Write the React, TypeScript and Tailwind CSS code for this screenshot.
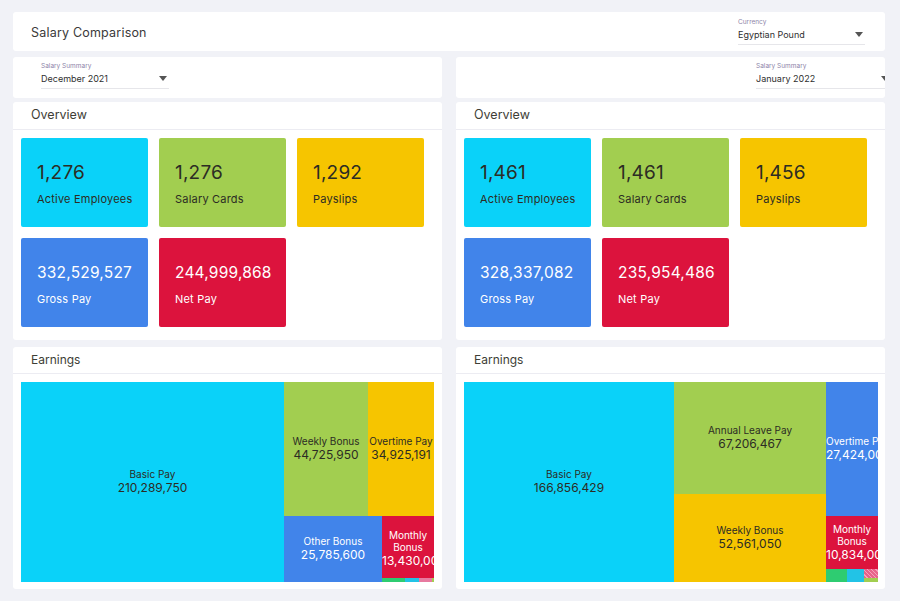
import React from 'react';

const font = { fontFamily: 'Inter, "Noto Sans", sans-serif' };

type Tile = { value: string; label: string; bg: string; dark: boolean };

const leftTiles: Tile[] = [
  { value: '1,276', label: 'Active Employees', bg: 'bg-[#0ad2f9]', dark: true },
  { value: '1,276', label: 'Salary Cards', bg: 'bg-[#a2ce50]', dark: true },
  { value: '1,292', label: 'Payslips', bg: 'bg-[#f6c500]', dark: true },
  { value: '332,529,527', label: 'Gross Pay', bg: 'bg-[#4184ea]', dark: false },
  { value: '244,999,868', label: 'Net Pay', bg: 'bg-[#dc133d]', dark: false },
];

const rightTiles: Tile[] = [
  { value: '1,461', label: 'Active Employees', bg: 'bg-[#0ad2f9]', dark: true },
  { value: '1,461', label: 'Salary Cards', bg: 'bg-[#a2ce50]', dark: true },
  { value: '1,456', label: 'Payslips', bg: 'bg-[#f6c500]', dark: true },
  { value: '328,337,082', label: 'Gross Pay', bg: 'bg-[#4184ea]', dark: false },
  { value: '235,954,486', label: 'Net Pay', bg: 'bg-[#dc133d]', dark: false },
];

function Caret() {
  return (
    <svg width="8" height="5" viewBox="0 0 8 5" className="shrink-0">
      <path d="M0 0 L8 0 L4 5 Z" fill="#555" />
    </svg>
  );
}

function Select({ label, value, width }: { label: string; value: string; width: string }) {
  return (
    <div className={`${width} flex flex-col`}>
      <span className="text-[6.5px] leading-[8px] text-[#8d84a8]">{label}</span>
      <div className="flex items-center justify-between border-b border-[#e6e6ea] pb-[4px] pt-[3px] pr-[2px]">
        <span className="text-[9px] leading-[11px] text-[#2f2f2f]">{value}</span>
        <Caret />
      </div>
    </div>
  );
}

function StatTile({ t }: { t: Tile }) {
  const txt = t.dark ? 'text-[#2c2c24]' : 'text-white';
  // long amounts are set a bit smaller, as in the source
  const big = t.value.length > 6 ? 'text-[15.5px]' : 'text-[19px]';
  return (
    <div className={`${t.bg} ${txt} h-[89px] rounded-[2px] flex flex-col justify-center pl-[16px] pt-[3px]`}>
      <div className={`${big} leading-[22px] tracking-[0.2px]`}>{t.value}</div>
      <div className="text-[11px] leading-[13px] mt-[9px] tracking-[0.2px]">{t.label}</div>
    </div>
  );
}

function Overview({ tiles }: { tiles: Tile[] }) {
  return (
    <div className="bg-white rounded-[3px] h-[238px] flex flex-col">
      <div className="h-[28px] flex items-center pl-[18px] border-b border-[#ececf2] text-[12.5px] text-[#3e3e36]">
        Overview
      </div>
      <div className="grid grid-cols-[127px_127px_127px] gap-x-[11px] gap-y-[11px] pl-[8px] pt-[8px]">
        {tiles.map((t, i) => (
          <StatTile key={i} t={t} />
        ))}
      </div>
    </div>
  );
}

function Cell({
  label,
  value,
  bg,
  dark,
  className = '',
}: {
  label: React.ReactNode;
  value?: string;
  bg: string;
  dark: boolean;
  className?: string;
}) {
  const txt = dark ? 'text-[#2c2c24]' : 'text-white';
  return (
    <div className={`${bg} ${txt} ${className} overflow-hidden flex flex-col justify-center text-center`}>
      <div className="text-[10px] leading-[12px]">{label}</div>
      {value && <div className="text-[12px] leading-[16px] whitespace-nowrap">{value}</div>}
    </div>
  );
}

function LeftTreemap() {
  return (
    <div className="flex h-[200px] w-[413px]">
      <Cell label="Basic Pay" value="210,289,750" bg="bg-[#0ad2f9]" dark className="w-[263px] h-full" />
      <div className="flex flex-col w-[150px]">
        <div className="flex h-[134px]">
          <Cell label="Weekly Bonus" value="44,725,950" bg="bg-[#a2ce50]" dark className="w-[84px] h-full" />
          <Cell label="Overtime Pay" value="34,925,191" bg="bg-[#f6c500]" dark className="w-[66px] h-full whitespace-nowrap" />
        </div>
        <div className="flex h-[66px]">
          <Cell label="Other Bonus" value="25,785,600" bg="bg-[#4184ea]" dark={false} className="w-[98px] h-full" />
          <div className="flex flex-col w-[52px]">
            <Cell
              label={<>Monthly<br />Bonus</>}
              value="13,430,000"
              bg="bg-[#dc133d]"
              dark={false}
              className="h-[62px] pt-[4px]"
            />
            <div className="flex h-[4px]">
              <div className="w-[23px] bg-[#2ecc71]" />
              <div className="w-[14px] bg-[#22c3e6]" />
              <div className="w-[13px] bg-[#e77aa0]" />
              <div className="w-[2px] bg-[#a2ce50]" />
            </div>
          </div>
        </div>
      </div>
    </div>
  );
}

function RightTreemap() {
  return (
    <div className="flex h-[200px] w-[414px]">
      <Cell label="Basic Pay" value="166,856,429" bg="bg-[#0ad2f9]" dark className="w-[210px] h-full" />
      <div className="flex flex-col w-[152px]">
        <Cell label="Annual Leave Pay" value="67,206,467" bg="bg-[#a2ce50]" dark className="h-[112px]" />
        <Cell label="Weekly Bonus" value="52,561,050" bg="bg-[#f6c500]" dark className="h-[88px]" />
      </div>
      <div className="flex flex-col w-[52px]">
        <Cell label="Overtime Pay" value="27,424,000" bg="bg-[#4184ea]" dark={false} className="h-[134px] whitespace-nowrap" />
        <Cell
          label={<>Monthly<br />Bonus</>}
          value="10,834,000"
          bg="bg-[#dc133d]"
          dark={false}
          className="h-[53px]"
        />
        <div className="flex h-[13px]">
          <div className="w-[21px] bg-[#2ecc71]" />
          <div className="w-[17px] bg-[#22c3e6]" />
          <div className="w-[14px] flex flex-col">
            <div className="h-[9px] bg-[repeating-linear-gradient(45deg,#e8638a_0px,#e8638a_2px,#f3a3bb_2px,#f3a3bb_3px)]" />
            <div className="h-[4px] bg-[#a2ce50]" />
          </div>
        </div>
      </div>
    </div>
  );
}

function Earnings({ children }: { children: React.ReactNode }) {
  return (
    <div className="bg-white rounded-[3px] h-[242px] flex flex-col">
      <div className="h-[27px] flex items-center pl-[18px] border-b border-[#ececf2] text-[12px] text-[#3e3e36]">
        Earnings
      </div>
      <div className="pl-[8px] pt-[8px]">{children}</div>
    </div>
  );
}

export default function App() {
  return (
    <div style={font} className="w-[900px] h-[601px] bg-[#f1f2f7] pt-[12px] pl-[13px] pr-[15px] overflow-hidden">
      {/* top bar */}
      <div className="bg-white rounded-[3px] h-[39px] flex items-center justify-between pl-[18px] pr-[20px]">
        <span className="text-[12.5px] text-[#3a3a3a] tracking-[0.2px] mt-[3px]">Salary Comparison</span>
        <Select label="Currency" value="Egyptian Pound" width="w-[127px]" />
      </div>

      <div className="grid grid-cols-[429px_429px] gap-x-[14px] mt-[6px]">
        <div className="bg-white rounded-[3px] h-[41px] flex items-start pt-[5px] pl-[28px]">
          <Select label="Salary Summary" value="December 2021" width="w-[128px]" />
        </div>
        <div className="bg-white rounded-[3px] h-[41px] flex items-start pt-[5px] justify-end overflow-hidden">
          <div className="mr-[-6px]">
            <Select label="Salary Summary" value="January 2022" width="w-[135px]" />
          </div>
        </div>

        <div className="mt-[4px]">
          <Overview tiles={leftTiles} />
        </div>
        <div className="mt-[4px]">
          <Overview tiles={rightTiles} />
        </div>

        <div className="mt-[7px]">
          <Earnings>
            <LeftTreemap />
          </Earnings>
        </div>
        <div className="mt-[7px]">
          <Earnings>
            <RightTreemap />
          </Earnings>
        </div>
      </div>
    </div>
  );
}
